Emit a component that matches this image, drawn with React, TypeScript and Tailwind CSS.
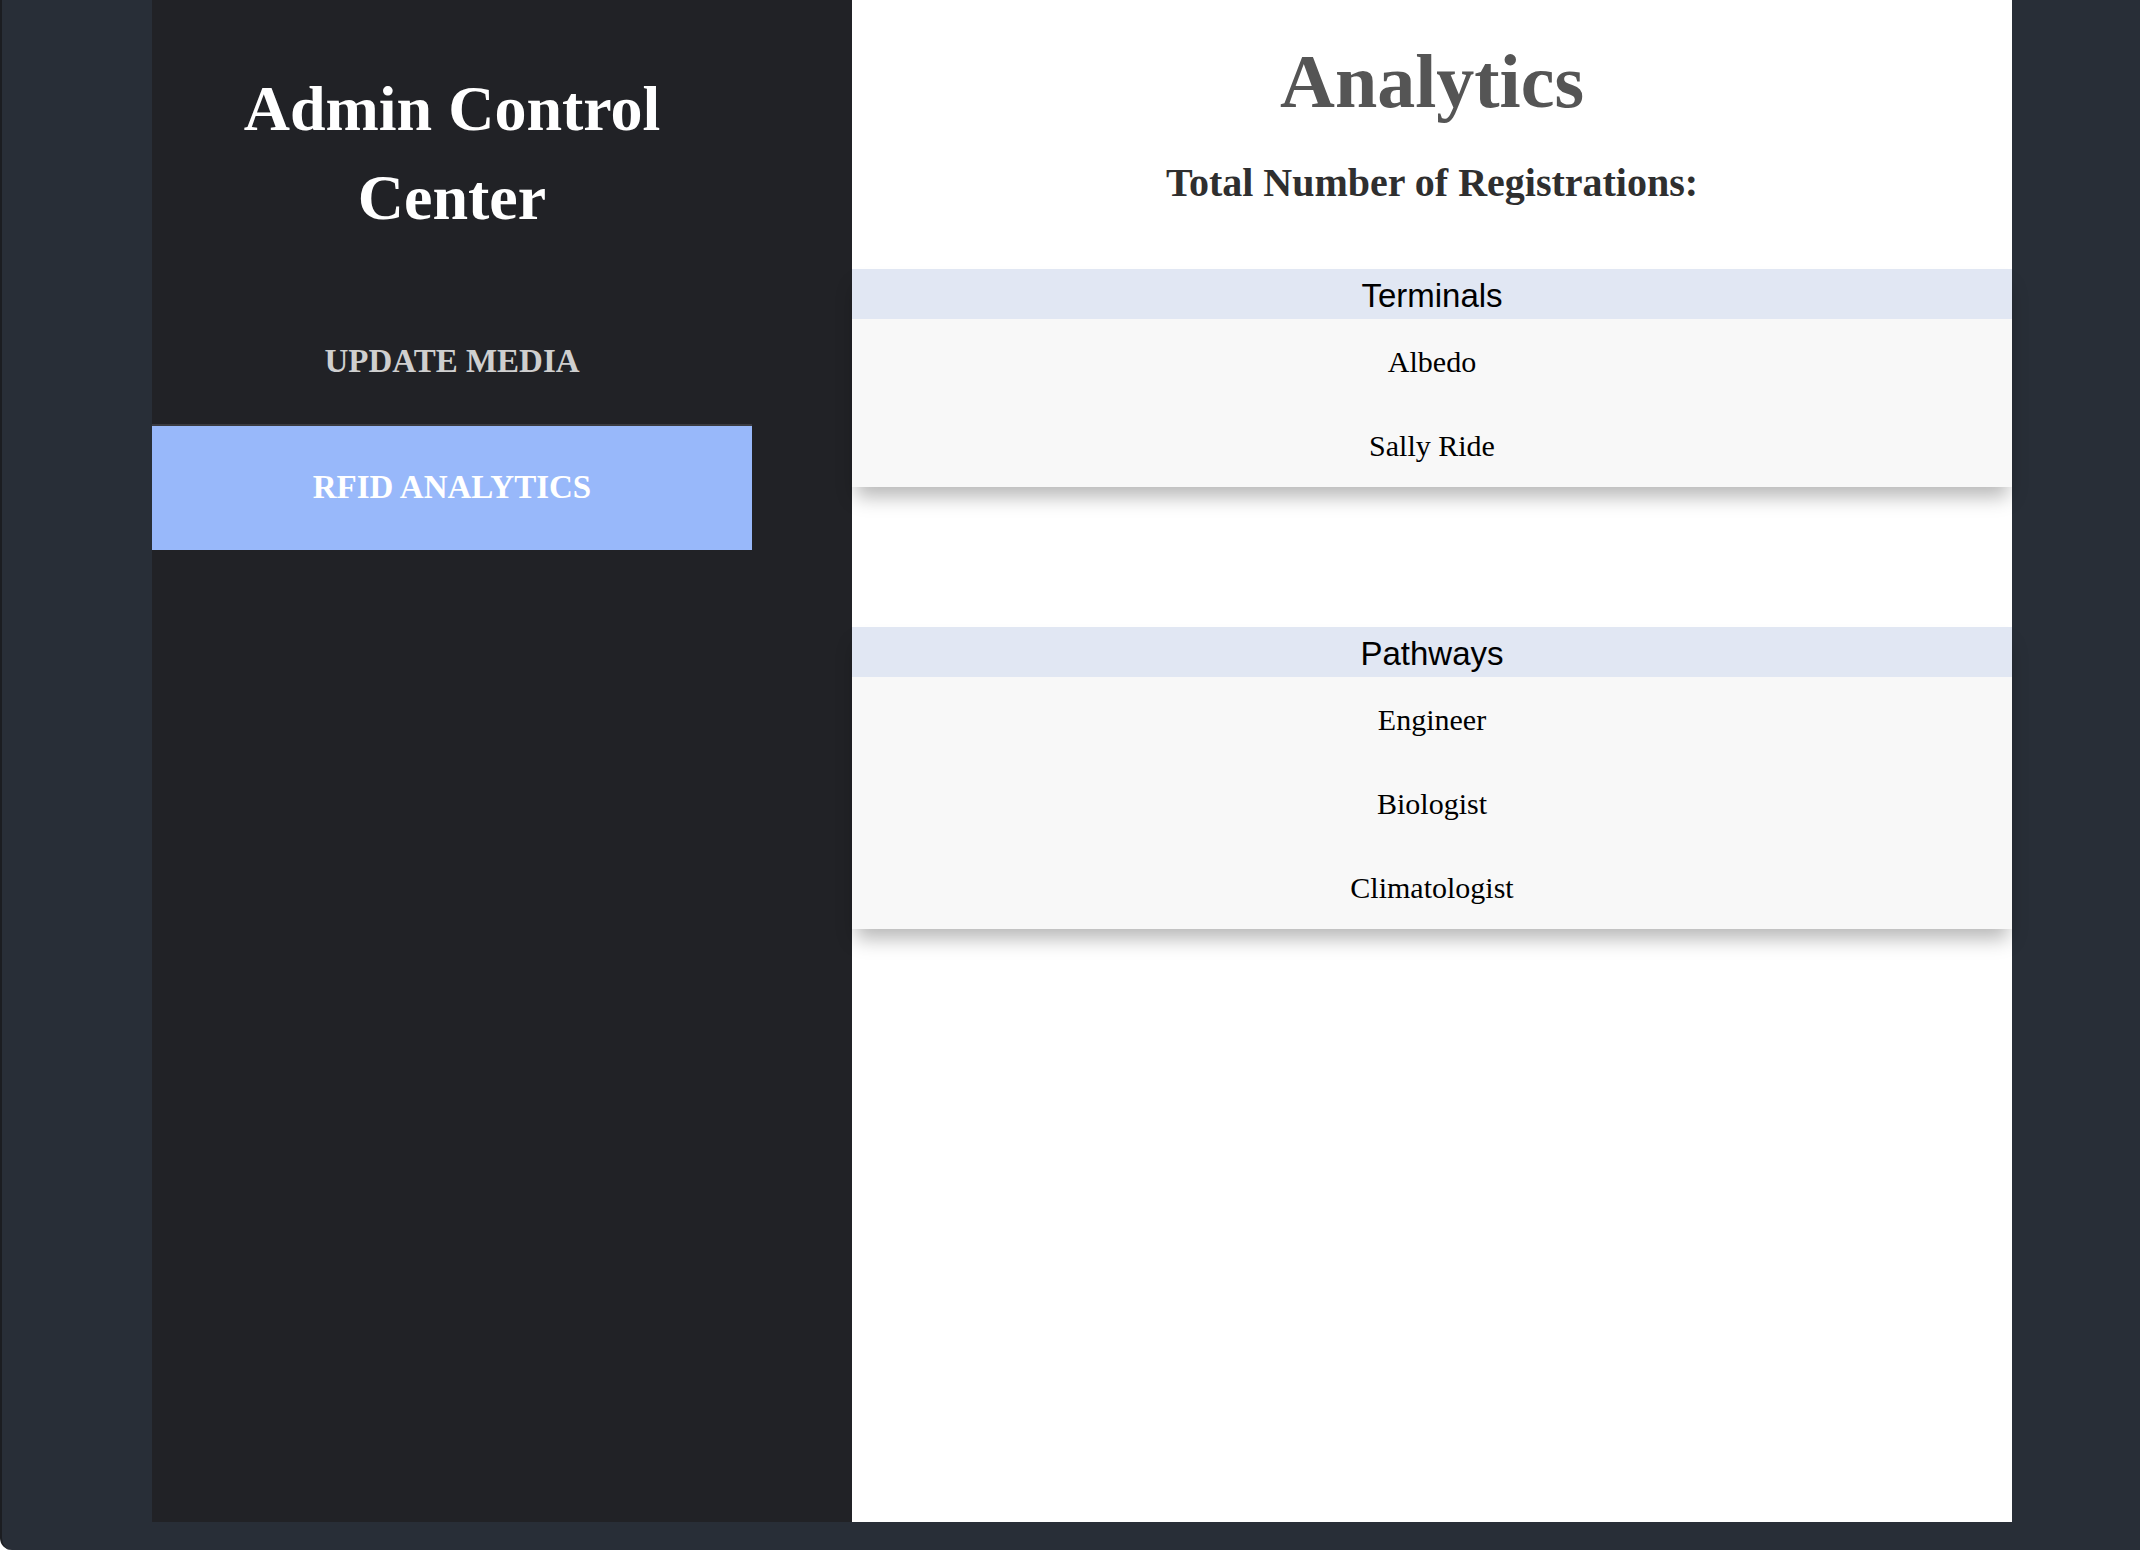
const serif = { fontFamily: '"Liberation Serif", "Times New Roman", serif' }

const sections = [
  { title: "Terminals", items: ["Albedo", "Sally Ride"] },
  { title: "Pathways", items: ["Engineer", "Biologist", "Climatologist"] },
]

function NavItem({ label, active }: { label: string; active?: boolean }) {
  return (
    <div
      className={
        active
          ? "h-[126px] flex items-center justify-center border-t-2 border-[#3a3b40] bg-[#98b8fa] text-white"
          : "h-[124px] flex items-center justify-center text-[#cfcfcf]"
      }
    >
      <span className="text-[33px] font-bold">{label}</span>
    </div>
  )
}

function Section({ title, items }: { title: string; items: string[] }) {
  return (
    <div className="shadow-[0_14px_18px_-4px_rgba(0,0,0,0.28)]">
      <div
        className="h-[50px] pt-[4px] flex items-center justify-center bg-[#e1e7f3] text-black text-[33px]"
        style={{ fontFamily: '"Liberation Sans", Arial, sans-serif' }}
      >
        {title}
      </div>
      <div className="bg-[#f8f8f8]">
        {items.map((item) => (
          <div
            key={item}
            className="h-[84px] flex items-center justify-center text-[30px] text-black"
          >
            {item}
          </div>
        ))}
      </div>
    </div>
  )
}

export default function App() {
  return (
    <div
      className="w-[2140px] h-[1550px] flex bg-[#282e37] pl-[150px] pb-[28px] border-l-2 border-[#1b1d21] rounded-bl-[12px] overflow-hidden"
      style={serif}
    >
      {/* sidebar */}
      <aside className="w-[700px] bg-[#212226] flex flex-col">
        <div className="w-[600px] flex flex-col">
          <h1 className="pt-[64px] text-center text-white text-[64px] leading-[89px] font-bold">
            Admin Control
            <br />
            Center
          </h1>
          <nav className="mt-[58px] flex flex-col">
            <NavItem label="UPDATE MEDIA" />
            <NavItem label="RFID ANALYTICS" active />
          </nav>
        </div>
      </aside>

      {/* main */}
      <main className="w-[1160px] bg-white flex flex-col">
        <h2 className="pt-[37px] text-center text-[76px] leading-[88px] font-bold text-[#555555]">
          Analytics
        </h2>
        <h3 className="mt-[35px] text-center text-[40px] leading-[46px] font-bold text-[#2f2f2f]">
          Total Number of Registrations:
        </h3>
        <div className="mt-[63px] flex flex-col gap-[140px]">
          {sections.map((s) => (
            <Section key={s.title} title={s.title} items={s.items} />
          ))}
        </div>
      </main>
    </div>
  )
}
